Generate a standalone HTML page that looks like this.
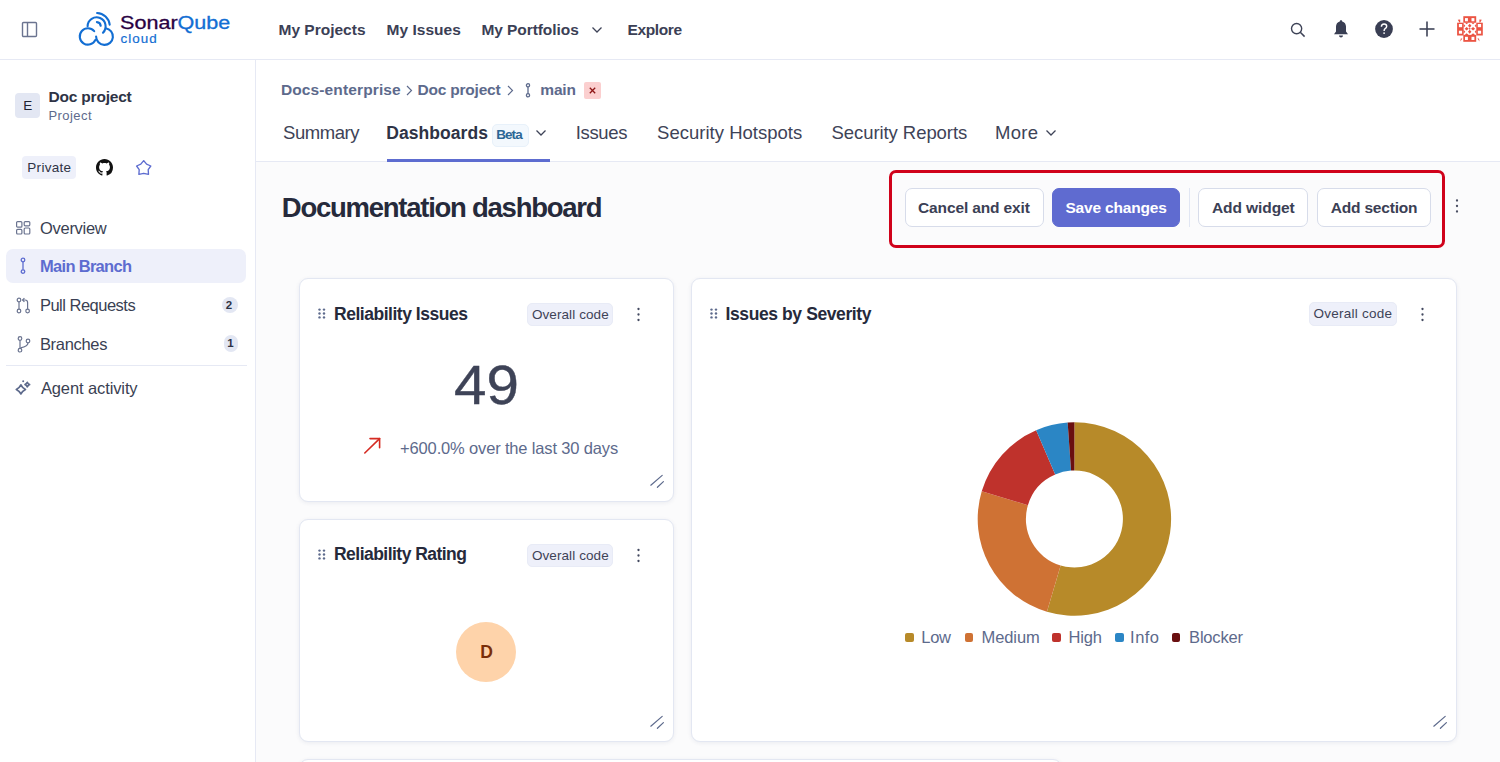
<!DOCTYPE html>
<html><head><meta charset="utf-8">
<style>
*{box-sizing:border-box;margin:0;padding:0}
html,body{width:1500px;height:762px;overflow:hidden;background:#fff;font-family:"Liberation Sans",sans-serif;color:#2a2f40}
.abs{position:absolute}
.t{position:absolute;white-space:nowrap;line-height:1}
.card{position:absolute;background:#fff;border:1px solid #e3e7f2;border-radius:9px;box-shadow:0 1px 4px rgba(40,50,100,0.08)}
.btn{position:absolute;top:188px;height:39px;border:1px solid #d7dcea;border-radius:7px;background:#fff}
.tag{position:absolute;height:23px;background:#eef0fa;border:1px solid #e8ebf6;border-radius:5px}
.sq{position:absolute;width:8.7px;height:8.7px;border-radius:2px}
</style></head>
<body>
<!-- main bg -->
<div class="abs" style="left:256px;top:60px;width:1244px;height:702px;background:#fbfbfc"></div>
<!-- top nav -->
<div class="abs" style="left:0;top:0;width:1500px;height:60px;background:#fff;border-bottom:1px solid #e6e9f4"></div>
<!-- sidebar -->
<div class="abs" style="left:0;top:60px;width:256px;height:702px;background:#fff;border-right:1px solid #e6e9f4"></div>
<!-- header -->
<div class="abs" style="left:256px;top:60px;width:1244px;height:102px;background:#fff;border-bottom:1px solid #e6e9f4"></div>

<svg class="abs" style="left:21px;top:21px" width="17" height="17" viewBox="0 0 17 17"><rect x="1.5" y="1.5" width="14" height="14" rx="1" fill="none" stroke="#6b7490" stroke-width="1.4"/><line x1="6.5" y1="1.5" x2="6.5" y2="15.5" stroke="#6b7490" stroke-width="1.4"/></svg>
<svg class="abs" style="left:76px;top:9px" width="42" height="40" viewBox="76 9 42 40">
  <g fill="none" stroke="#126ed3" stroke-width="2.1" stroke-linecap="round">
    <path d="M87.6 26.3 A9 9 0 1 1 103 32.7"/>
    <path d="M94.2 31.1 A8.2 8.2 0 1 0 95.4 39.9"/>
    <path d="M96.1 36.5 A8.4 8.4 0 1 0 105.7 28.2"/>
    <path d="M97.1 13 A13.3 13.3 0 0 1 109.7 24.6"/>
    <path d="M96.9 22.1 A4.2 4.2 0 0 1 100.7 25.8"/>
  </g>
</svg>
<div class="t" style="left:120px;top:13.9px;font-size:18.3px;transform:scaleX(1.18);transform-origin:0 0;-webkit-text-stroke:0.3px #290042;color:#290042">Sonar<span style="color:#126ed3;-webkit-text-stroke:0.3px #126ed3">Qube</span></div>
<div class="t" style="left:120.5px;top:31.6px;font-size:13.4px;letter-spacing:1.05px;color:#126ed3;-webkit-text-stroke:0.2px #126ed3">cloud</div>
<svg class="abs" style="left:590.5px;top:25.5px" width="12" height="8" viewBox="0 0 12 8"><path d="M1.5 1.5 L6 6 L10.5 1.5" fill="none" stroke="#3e4357" stroke-width="1.25"/></svg>
<svg class="abs" style="left:1290px;top:22px" width="16" height="16" viewBox="0 0 16 16"><circle cx="6.6" cy="6.6" r="5.1" fill="none" stroke="#3e4357" stroke-width="1.4"/><line x1="10.3" y1="10.3" x2="14.6" y2="14.6" stroke="#3e4357" stroke-width="1.5"/></svg>
<svg class="abs" style="left:1332px;top:19px" width="18" height="20" viewBox="0 0 18 20"><path d="M9 1.2 C9.8 1.2 10.2 1.8 10.2 2.4 C12.6 3 14 5 14 7.6 L14 12.6 L16 15.2 L2 15.2 L4 12.6 L4 7.6 C4 5 5.4 3 7.8 2.4 C7.8 1.8 8.2 1.2 9 1.2 Z" fill="#393e53"/><path d="M7 16.6 L11 16.6 C11 17.8 10 18.6 9 18.6 C8 18.6 7 17.8 7 16.6Z" fill="#393e53"/></svg>
<svg class="abs" style="left:1374px;top:19px" width="20" height="20" viewBox="0 0 20 20"><circle cx="10" cy="10" r="8.9" fill="#393e53"/><path d="M7.4 7.7 C7.4 5.9 8.6 4.9 10.1 4.9 C11.7 4.9 12.7 6 12.7 7.3 C12.7 8.6 11.9 9.2 11.1 9.7 C10.4 10.2 10.1 10.7 10.1 11.9" fill="none" stroke="#fff" stroke-width="1.45"/><rect x="9.35" y="13.4" width="1.5" height="1.5" fill="#fff"/></svg>
<svg class="abs" style="left:1418px;top:20px" width="18" height="18" viewBox="0 0 18 18"><line x1="9" y1="1.5" x2="9" y2="16.5" stroke="#3e4357" stroke-width="1.6"/><line x1="1.5" y1="9" x2="16.5" y2="9" stroke="#3e4357" stroke-width="1.6"/></svg>
<svg class="abs" style="left:1454px;top:14px" width="32" height="30" viewBox="0 0 32 30">
  <g fill="#eb5443">
    <rect x="9.3" y="2.2" width="12.9" height="6.5"/><rect x="3.1" y="8.7" width="6.5" height="12.8"/>
    <rect x="22.3" y="8.7" width="6.5" height="12.8"/><rect x="9.3" y="20.9" width="12.9" height="6.9"/>
    <path d="M10.65 8.6 L12.65 10.30 L14.65 8.6Z M10.65 20.9 L12.65 19.20 L14.65 20.9Z M10.65 14.7 L12.65 13.00 L14.65 14.7 L12.65 16.40Z M17.05 8.6 L19.05 10.30 L21.05 8.6Z M17.05 20.9 L19.05 19.20 L21.05 20.9Z M17.05 14.7 L19.05 13.00 L21.05 14.7 L19.05 16.40Z M9.5 9.65 L11.30 11.65 L9.5 13.65Z M22.4 9.65 L20.70 11.65 L22.4 13.65Z M15.7 9.65 L17.40 11.65 L15.7 13.65 L14.00 11.65Z M9.5 15.80 L11.30 17.80 L9.5 19.80Z M22.4 15.80 L20.70 17.80 L22.4 19.80Z M15.7 15.80 L17.40 17.80 L15.7 19.80 L14.00 17.80Z M15.7 13.7 L16.7 14.7 L15.7 15.7 L14.7 14.7Z"/>
    <path d="M3.8 5.8 L6.2 5.6 L6.2 8.6 L5.4 8.6 Z M27.8 5.8 L25.4 5.6 L25.4 8.6 L26.2 8.6Z M6.3 27.5 L6.8 24.5 L8.4 24.4 Z M25.5 27.5 L25 24.5 L23.4 24.4Z"/>
  </g>
  <g fill="#fff">
    <rect x="11" y="4.1" width="2.9" height="3.2"/><rect x="17.5" y="4.1" width="2.9" height="3.2"/>
    <rect x="11" y="22.8" width="2.9" height="3.2"/><rect x="17.5" y="22.8" width="2.9" height="3.2"/>
    <rect x="4.9" y="10" width="3.2" height="3.2"/><rect x="4.9" y="16.7" width="3.2" height="3"/>
    <rect x="23.8" y="10" width="3.3" height="3.2"/><rect x="23.8" y="16.7" width="3.3" height="3"/>
  </g>
</svg>

<!-- sidebar content -->
<div class="abs" style="left:15px;top:93px;width:25px;height:25px;background:#e3e7f3;border-radius:4px"></div>
<div class="abs" style="left:22px;top:156px;width:54px;height:23px;background:#eef0fa;border-radius:4px"></div>
<svg class="abs" style="left:96px;top:159px" width="17" height="17" viewBox="0 0 16 16"><path fill="#111" d="M8 0C3.58 0 0 3.58 0 8c0 3.54 2.29 6.530 5.47 7.59.4.07.55-.17.55-.38 0-.19-.01-.82-.01-1.49-2.01.37-2.53-.49-2.69-.94-.09-.23-.48-.94-.82-1.130-.28-.15-.68-.52-.01-.53.63-.01 1.08.58 1.23.82.72 1.21 1.87.87 2.33.66.07-.52.28-.87.51-1.07-1.78-.2-3.64-.89-3.64-3.95 0-.87.31-1.59.82-2.15-.08-.2-.36-1.02.08-2.12 0 0 .67-.21 2.2.82.64-.18 1.32-.27 2-.27.68 0 1.36.09 2 .27 1.53-1.04 2.2-.82 2.2-.82.44 1.1.16 1.92.08 2.12.51.56.82 1.27.82 2.15 0 3.07-1.87 3.75-3.65 3.95.29.25.54.73.54 1.48 0 1.07-.01 1.93-.01 2.2 0 .21.15.46.55.38A8.013 8.013 0 0016 8c0-4.42-3.58-8-8-8z"/></svg>
<svg class="abs" style="left:134px;top:158px" width="19" height="19" viewBox="0 0 19 19"><path d="M9.7 2.6 L12.6 6.2 L16.8 8 L14.2 11.7 L14.5 16.3 L9.7 15.3 L4.9 16.3 L5.2 11.7 L2.6 8 L6.8 6.2 Z" fill="none" stroke="#5d6cd0" stroke-width="1.35" stroke-linejoin="round"/></svg>
<svg class="abs" style="left:16px;top:221px" width="15" height="14" viewBox="0 0 15 14"><g fill="none" stroke="#6b7490" stroke-width="1.2"><rect x="0.6" y="0.6" width="5.3" height="5.6" rx="1"/><rect x="8.2" y="0.6" width="5.6" height="4.2" rx="1"/><rect x="0.6" y="8.4" width="5.3" height="4.6" rx="1"/><rect x="8.2" y="7" width="5.6" height="6" rx="1"/></g></svg>
<div class="abs" style="left:6px;top:249px;width:240px;height:34px;background:#eef0fa;border-radius:7px"></div>
<svg class="abs" style="left:18px;top:257px" width="10" height="18" viewBox="0 0 10 18"><g fill="none" stroke="#5d6cd0" stroke-width="1.3"><circle cx="5" cy="3" r="1.8"/><circle cx="5" cy="14.6" r="1.8"/><line x1="5" y1="4.8" x2="5" y2="12.8"/></g></svg>
<svg class="abs" style="left:16px;top:297px" width="16" height="17" viewBox="0 0 16 17"><g fill="none" stroke="#6b7490" stroke-width="1.2"><circle cx="3" cy="3" r="1.8"/><circle cx="3" cy="14" r="1.8"/><line x1="3" y1="4.8" x2="3" y2="12.2"/><circle cx="11.6" cy="14" r="1.8"/><path d="M11.6 12.2 L11.6 5.5 Q11.6 3 9.1 3 L6.6 3"/><path d="M8.4 1.2 L6.6 3 L8.4 4.8"/></g></svg>
<div class="abs" style="left:222px;top:296.5px;width:16px;height:16.5px;background:#e3e7f3;border-radius:8px"></div>
<svg class="abs" style="left:17px;top:335.5px" width="14" height="17" viewBox="0 0 14 17"><g fill="none" stroke="#6b7490" stroke-width="1.2"><circle cx="3" cy="2.5" r="1.8"/><circle cx="3" cy="14.2" r="1.8"/><line x1="3" y1="4.3" x2="3" y2="12.4"/><circle cx="11" cy="5" r="1.8"/><path d="M11 6.8 Q11 10.5 3.5 11.8"/></g></svg>
<div class="abs" style="left:224px;top:335px;width:14px;height:17px;background:#e3e7f3;border-radius:7px"></div>
<div class="abs" style="left:6px;top:365px;width:241px;height:1px;background:#e6e9f4"></div>
<svg class="abs" style="left:15px;top:379px" width="18" height="18" viewBox="0 0 18 18"><g fill="none" stroke="#5d6a8c" stroke-width="1.7" stroke-linejoin="round"><path d="M5.9 5.800000000000001 Q7.37 8.93 10.5 10.4 Q7.37 11.87 5.9 15.0 Q4.43 11.87 1.3000000000000007 10.4 Q4.43 8.93 5.9 5.800000000000001Z"/><path d="M12.3 3.3 Q13.11 4.79 14.600000000000001 5.6 Q13.11 6.40 12.3 7.8999999999999995 Q11.50 6.40 10.0 5.6 Q11.50 4.79 12.3 3.3Z"/></g><circle cx="8.2" cy="2.2" r="1" fill="#5d6a8c"/></svg>

<!-- header content -->
<svg class="abs" style="left:405px;top:85px" width="8" height="11" viewBox="0 0 8 11"><path d="M2 1 L6.5 5.5 L2 10" fill="none" stroke="#5d6a8c" stroke-width="1.15"/></svg>
<svg class="abs" style="left:506px;top:85px" width="8" height="11" viewBox="0 0 8 11"><path d="M2 1 L6.5 5.5 L2 10" fill="none" stroke="#5d6a8c" stroke-width="1.15"/></svg>
<svg class="abs" style="left:523px;top:83px" width="10" height="15" viewBox="0 0 10 15"><g fill="none" stroke="#5d6a8c" stroke-width="1.3"><circle cx="5" cy="2.3" r="1.6"/><circle cx="5" cy="12.3" r="1.6"/><line x1="5" y1="3.9" x2="5" y2="10.7"/></g></svg>
<div class="abs" style="left:584px;top:82px;width:17px;height:17px;background:#fbcfcf;border-radius:2px"></div>
<svg class="abs" style="left:588px;top:86px" width="9" height="9" viewBox="0 0 9 9"><path d="M1.8 1.8 L7.2 7.2 M7.2 1.8 L1.8 7.2" stroke="#8e1515" stroke-width="1.3"/></svg>
<div class="abs" style="left:491.5px;top:124px;width:37px;height:23px;background:#f3f8fd;border:1px solid #e8f1fa;border-radius:5px"></div>
<svg class="abs" style="left:535px;top:129px" width="12" height="8" viewBox="0 0 12 8"><path d="M1.5 1.5 L6 6 L10.5 1.5" fill="none" stroke="#3e4357" stroke-width="1.25"/></svg>
<svg class="abs" style="left:1045px;top:129px" width="12" height="8" viewBox="0 0 12 8"><path d="M1.5 1.5 L6 6 L10.5 1.5" fill="none" stroke="#3e4357" stroke-width="1.25"/></svg>
<div class="abs" style="left:387px;top:159px;width:163px;height:3px;background:#5d6cd0"></div>

<!-- toolbar -->
<div class="abs" style="left:889px;top:170px;width:556px;height:78px;border:3px solid #d0021b;border-radius:7px"></div>
<div class="btn" style="left:905px;width:139px"></div>
<div class="btn" style="left:1052px;width:128px;background:#5f6bd0;border-color:#5f6bd0"></div>
<div class="abs" style="left:1189px;top:188px;width:1px;height:39px;background:#e1e6f3"></div>
<div class="btn" style="left:1198px;width:110px"></div>
<div class="btn" style="left:1317px;width:114px"></div>
<svg class="abs" style="left:1454px;top:198px" width="6" height="16" viewBox="0 0 6 16"><g fill="#4a4f63"><circle cx="3" cy="2.5" r="1.15"/><circle cx="3" cy="8" r="1.15"/><circle cx="3" cy="13.5" r="1.15"/></g></svg>

<!-- cards -->
<div class="card" style="left:299px;top:278px;width:375px;height:224px">
 <svg class="abs" style="left:17.5px;top:29px" width="8" height="11" viewBox="0 0 8 11"><g fill="#5d6a8c"><circle cx="1.5" cy="1.6" r="1.2"/><circle cx="6" cy="1.6" r="1.2"/><circle cx="1.5" cy="5.5" r="1.2"/><circle cx="6" cy="5.5" r="1.2"/><circle cx="1.5" cy="9.4" r="1.2"/><circle cx="6" cy="9.4" r="1.2"/></g></svg>
 <div class="tag" style="left:227px;top:24px;width:86px"></div>
 <svg class="abs" style="left:335px;top:28px" width="7" height="15" viewBox="0 0 7 15"><g fill="#434960"><circle cx="3.5" cy="2" r="1.15"/><circle cx="3.5" cy="7.5" r="1.15"/><circle cx="3.5" cy="13" r="1.15"/></g></svg>
 <svg class="abs" style="left:63px;top:158px" width="19" height="18" viewBox="0 0 19 18"><g fill="none" stroke="#d52b22" stroke-width="1.6" stroke-linecap="round" stroke-linejoin="round"><line x1="1.8" y1="16" x2="16.6" y2="1.6"/><path d="M7 1.6 L16.6 1.6 L16.6 10.8"/></g></svg>
 <svg class="abs" style="left:349px;top:195px" width="16" height="16" viewBox="0 0 16 16"><g stroke="#5d6a8c" stroke-width="1.2" stroke-linecap="round"><line x1="1.8" y1="11.2" x2="13.2" y2="1.4"/><line x1="8.4" y1="13.3" x2="14.4" y2="7.6"/></g></svg>
</div>
<div class="card" style="left:299px;top:519px;width:375px;height:223px">
 <svg class="abs" style="left:17.5px;top:29px" width="8" height="11" viewBox="0 0 8 11"><g fill="#5d6a8c"><circle cx="1.5" cy="1.6" r="1.2"/><circle cx="6" cy="1.6" r="1.2"/><circle cx="1.5" cy="5.5" r="1.2"/><circle cx="6" cy="5.5" r="1.2"/><circle cx="1.5" cy="9.4" r="1.2"/><circle cx="6" cy="9.4" r="1.2"/></g></svg>
 <div class="tag" style="left:227px;top:24px;width:86px"></div>
 <svg class="abs" style="left:335px;top:28px" width="7" height="15" viewBox="0 0 7 15"><g fill="#434960"><circle cx="3.5" cy="2" r="1.15"/><circle cx="3.5" cy="7.5" r="1.15"/><circle cx="3.5" cy="13" r="1.15"/></g></svg>
 <div class="abs" style="left:156px;top:102px;width:60px;height:60px;border-radius:50%;background:#fed3aa"></div>
 <svg class="abs" style="left:349px;top:195px" width="16" height="16" viewBox="0 0 16 16"><g stroke="#5d6a8c" stroke-width="1.2" stroke-linecap="round"><line x1="1.8" y1="11.2" x2="13.2" y2="1.4"/><line x1="8.4" y1="13.3" x2="14.4" y2="7.6"/></g></svg>
</div>
<div class="card" style="left:691px;top:278px;width:766px;height:464px">
 <svg class="abs" style="left:0;top:0" width="764" height="462" viewBox="0 0 764 462">
<path d="M382.40 143.30 A96.7 96.7 0 1 1 354.94 332.72 L368.63 286.50 A48.5 48.5 0 1 0 382.40 191.50 Z" fill="#b78a29"/>
<path d="M354.94 332.72 A96.7 96.7 0 0 1 289.73 212.37 L335.92 226.14 A48.5 48.5 0 0 0 368.63 286.50 Z" fill="#cf7234"/>
<path d="M289.73 212.37 A96.7 96.7 0 0 1 344.15 151.19 L363.22 195.46 A48.5 48.5 0 0 0 335.92 226.14 Z" fill="#bf322c"/>
<path d="M344.15 151.19 A96.7 96.7 0 0 1 375.65 143.54 L379.02 191.62 A48.5 48.5 0 0 0 363.22 195.46 Z" fill="#2b86c5"/>
<path d="M375.65 143.54 A96.7 96.7 0 0 1 382.40 143.30 L382.40 191.50 A48.5 48.5 0 0 0 379.02 191.62 Z" fill="#6a0f10"/>
</svg>
 <svg class="abs" style="left:17.5px;top:29px" width="8" height="11" viewBox="0 0 8 11"><g fill="#5d6a8c"><circle cx="1.5" cy="1.6" r="1.2"/><circle cx="6" cy="1.6" r="1.2"/><circle cx="1.5" cy="5.5" r="1.2"/><circle cx="6" cy="5.5" r="1.2"/><circle cx="1.5" cy="9.4" r="1.2"/><circle cx="6" cy="9.4" r="1.2"/></g></svg>
 <div class="tag" style="left:617px;top:23px;width:88px;height:24px"></div>
 <svg class="abs" style="left:726.5px;top:28px" width="7" height="15" viewBox="0 0 7 15"><g fill="#434960"><circle cx="3.5" cy="2" r="1.15"/><circle cx="3.5" cy="7.5" r="1.15"/><circle cx="3.5" cy="13" r="1.15"/></g></svg>
 <div class="sq" style="left:213.3px;top:354px;background:#b78a29"></div>
 <div class="sq" style="left:272.8px;top:354px;background:#cf7234"></div>
 <div class="sq" style="left:360.2px;top:354px;background:#bf322c"></div>
 <div class="sq" style="left:423.3px;top:354px;background:#2b86c5"></div>
 <div class="sq" style="left:479.6px;top:354px;background:#6a0f10"></div>
 <svg class="abs" style="left:739.5px;top:436px" width="16" height="16" viewBox="0 0 16 16"><g stroke="#5d6a8c" stroke-width="1.2" stroke-linecap="round"><line x1="1.8" y1="11.2" x2="13.2" y2="1.4"/><line x1="8.4" y1="13.3" x2="14.4" y2="7.6"/></g></svg>
</div>
<div class="card" style="left:299px;top:759px;width:763px;height:60px"></div>

<!-- text -->
<div class="t" style="left:278.50px;top:22px;font-size:15.5px;font-weight:bold;letter-spacing:0.000px;color:#3b4055;">My Projects</div>
<div class="t" style="left:386.50px;top:22px;font-size:15.5px;font-weight:bold;letter-spacing:0.025px;color:#3b4055;">My Issues</div>
<div class="t" style="left:481.40px;top:22px;font-size:15.5px;font-weight:bold;letter-spacing:-0.067px;color:#3b4055;">My Portfolios</div>
<div class="t" style="left:627.60px;top:22px;font-size:15.5px;font-weight:bold;letter-spacing:-0.400px;color:#3b4055;">Explore</div>
<div class="t" style="left:23.20px;top:99px;font-size:13.5px;font-weight:normal;letter-spacing:0.000px;color:#1f2332;">E</div>
<div class="t" style="left:48.50px;top:89px;font-size:15.5px;font-weight:bold;letter-spacing:-0.200px;color:#2e3345;">Doc project</div>
<div class="t" style="left:48.50px;top:109px;font-size:13px;font-weight:normal;letter-spacing:0.433px;color:#5d6a8c;">Project</div>
<div class="t" style="left:27.30px;top:161px;font-size:13.5px;font-weight:normal;letter-spacing:0.300px;color:#2e3345;">Private</div>
<div class="t" style="left:40.00px;top:220px;font-size:16.5px;font-weight:normal;letter-spacing:-0.286px;color:#3a3f53;">Overview</div>
<div class="t" style="left:40.00px;top:258px;font-size:16.5px;font-weight:bold;letter-spacing:-0.700px;color:#5d6cd0;">Main Branch</div>
<div class="t" style="left:39.90px;top:297px;font-size:16.5px;font-weight:normal;letter-spacing:-0.500px;color:#3a3f53;">Pull Requests</div>
<div class="t" style="left:225.80px;top:300px;font-size:11.5px;font-weight:bold;letter-spacing:0.000px;color:#2e3345;">2</div>
<div class="t" style="left:39.90px;top:336px;font-size:16.5px;font-weight:normal;letter-spacing:-0.314px;color:#3a3f53;">Branches</div>
<div class="t" style="left:227.30px;top:338px;font-size:11.5px;font-weight:bold;letter-spacing:0.000px;color:#2e3345;">1</div>
<div class="t" style="left:40.90px;top:380px;font-size:16.5px;font-weight:normal;letter-spacing:-0.108px;color:#3a3f53;">Agent activity</div>
<div class="t" style="left:280.90px;top:82px;font-size:15.5px;font-weight:bold;letter-spacing:0.129px;color:#5d6a8c;">Docs-enterprise</div>
<div class="t" style="left:417.60px;top:82px;font-size:15.5px;font-weight:bold;letter-spacing:-0.220px;color:#5d6a8c;">Doc project</div>
<div class="t" style="left:540.30px;top:82px;font-size:15.5px;font-weight:bold;letter-spacing:-0.200px;color:#5d6a8c;">main</div>
<div class="t" style="left:283.00px;top:124px;font-size:18.5px;font-weight:normal;letter-spacing:-0.433px;color:#3e4357;">Summary</div>
<div class="t" style="left:386.20px;top:125px;font-size:17.5px;font-weight:bold;letter-spacing:0.067px;color:#2e3345;">Dashboards</div>
<div class="t" style="left:496.20px;top:128px;font-size:13.5px;font-weight:bold;letter-spacing:-0.933px;color:#2c6796;">Beta</div>
<div class="t" style="left:575.70px;top:124px;font-size:18.5px;font-weight:normal;letter-spacing:-0.320px;color:#3e4357;">Issues</div>
<div class="t" style="left:657.10px;top:124px;font-size:18.5px;font-weight:normal;letter-spacing:0.012px;color:#3e4357;">Security Hotspots</div>
<div class="t" style="left:831.50px;top:124px;font-size:18.5px;font-weight:normal;letter-spacing:-0.067px;color:#3e4357;">Security Reports</div>
<div class="t" style="left:995.00px;top:124px;font-size:18.5px;font-weight:normal;letter-spacing:0.333px;color:#3e4357;">More</div>
<div class="t" style="left:281.80px;top:194px;font-size:27.5px;font-weight:bold;letter-spacing:-1.255px;color:#262a3b;">Documentation dashboard</div>
<div class="t" style="left:918.00px;top:200px;font-size:15.5px;font-weight:bold;letter-spacing:-0.129px;color:#3b4055;">Cancel and exit</div>
<div class="t" style="left:1065.40px;top:200px;font-size:15.5px;font-weight:bold;letter-spacing:-0.182px;color:#ffffff;">Save changes</div>
<div class="t" style="left:1212.00px;top:200px;font-size:15.5px;font-weight:bold;letter-spacing:-0.089px;color:#3b4055;">Add widget</div>
<div class="t" style="left:1330.80px;top:200px;font-size:15.5px;font-weight:bold;letter-spacing:-0.200px;color:#3b4055;">Add section</div>
<div class="t" style="left:334.00px;top:306px;font-size:17.5px;font-weight:bold;letter-spacing:-0.471px;color:#262a3b;">Reliability Issues</div>
<div class="t" style="left:531.90px;top:308px;font-size:13.5px;font-weight:normal;letter-spacing:0.091px;color:#3e4357;">Overall code</div>
<div class="t" style="left:454.30px;top:358px;font-size:55px;font-weight:normal;letter-spacing:0.000px;color:#3e4357;transform:scaleX(1.06);transform-origin:0 0;-webkit-text-stroke:0.4px #3e4357;">49</div>
<div class="t" style="left:400.10px;top:440px;font-size:16.5px;font-weight:normal;letter-spacing:-0.157px;color:#5d6a8c;">+600.0% over the last 30 days</div>
<div class="t" style="left:334.00px;top:546px;font-size:17.5px;font-weight:bold;letter-spacing:-0.529px;color:#262a3b;">Reliability Rating</div>
<div class="t" style="left:531.90px;top:549px;font-size:13.5px;font-weight:normal;letter-spacing:0.091px;color:#3e4357;">Overall code</div>
<div class="t" style="left:480.20px;top:644px;font-size:17.5px;font-weight:bold;letter-spacing:0.000px;color:#7a2e08;">D</div>
<div class="t" style="left:725.50px;top:306px;font-size:17.5px;font-weight:bold;letter-spacing:-0.400px;color:#262a3b;">Issues by Severity</div>
<div class="t" style="left:1313.60px;top:307px;font-size:13.5px;font-weight:normal;letter-spacing:0.236px;color:#3e4357;">Overall code</div>
<div class="t" style="left:921.30px;top:629px;font-size:16.5px;font-weight:normal;letter-spacing:-0.300px;color:#5d6a8c;">Low</div>
<div class="t" style="left:981.60px;top:629px;font-size:16.5px;font-weight:normal;letter-spacing:-0.120px;color:#5d6a8c;">Medium</div>
<div class="t" style="left:1068.60px;top:629px;font-size:16.5px;font-weight:normal;letter-spacing:-0.200px;color:#5d6a8c;">High</div>
<div class="t" style="left:1130.10px;top:629px;font-size:16.5px;font-weight:normal;letter-spacing:0.467px;color:#5d6a8c;">Info</div>
<div class="t" style="left:1189.10px;top:629px;font-size:16.5px;font-weight:normal;letter-spacing:-0.200px;color:#5d6a8c;">Blocker</div>
</body></html>
